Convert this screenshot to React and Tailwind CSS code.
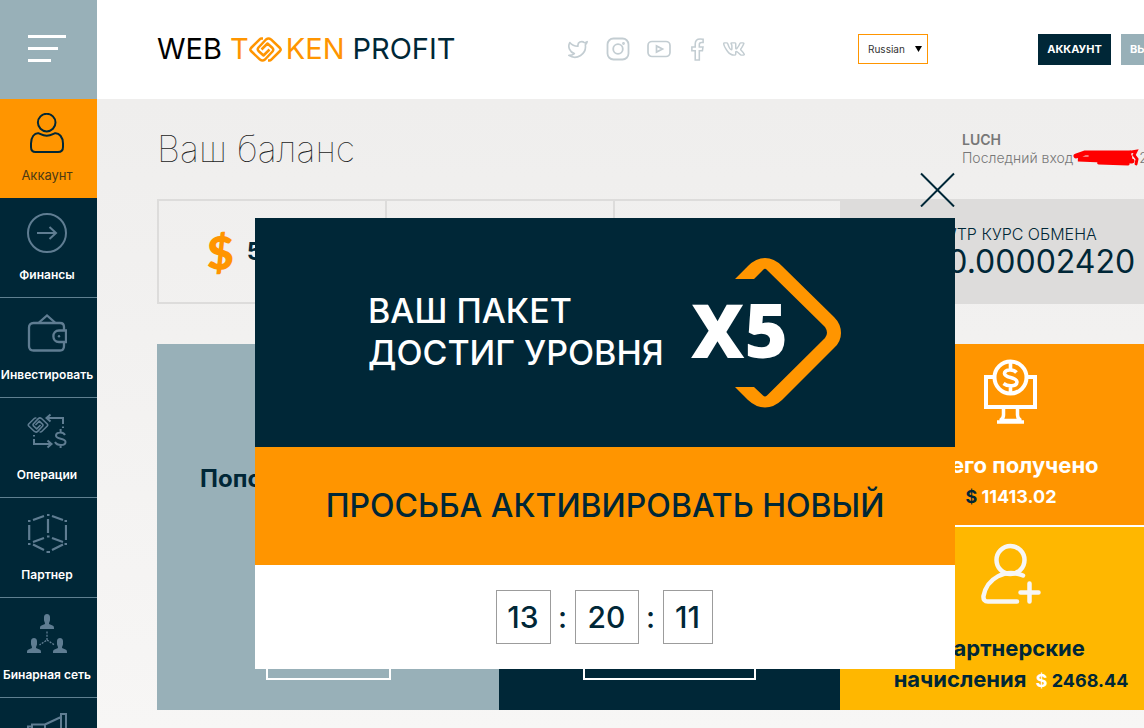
import React from "react";
import { FaFacebookF, FaVk } from "react-icons/fa";
import { Twitter } from "lucide-react";

function UserIcon() {
  return (
    <svg className="h-10 w-10" viewBox="0 0 40 40" fill="none" stroke="currentColor" strokeWidth="2">
      <circle cx="19.700" cy="9.600" r="8.800" />
      <path d="M11.500 20.200C14 21 15 22.800 19.700 22.800S25.500 21 28 20.200C32 19.800 36 24 36 30.500V34C36 37.500 34 39 31 39H8.500C5.500 39 4 37.500 4 34V30.500C4 24 7.500 19.800 11.500 20.200Z" />
    </svg>
  );
}

function ArrowIcon() {
  return (
    <svg className="h-10 w-10" viewBox="0 0 40 40" fill="none" stroke="currentColor" strokeWidth="2">
      <circle cx="20" cy="20" r="19" />
      <path d="M10 20H29M22.500 14L29 20L22.500 26" />
    </svg>
  );
}

function WalletIcon() {
  return (
    <svg className="h-10 w-10" viewBox="0 0 40 40" fill="none" stroke="currentColor" strokeWidth="2.300">
      <path d="M37 18V14C37 11.500 35.500 10 33 10H6.500C3.500 10 2 12 2 14.500V33C2 36 3.500 37.500 6.500 37.500H33C35.500 37.500 37 36 37 33V29" />
      <path d="M39 17.500H32C24.500 17.500 24.500 29 32 29H39Z" />
      <path d="M12 9.500L20 2.500L28 9.500" />
      <circle cx="32" cy="23.300" r="1.200" fill="currentColor" stroke="none" />
    </svg>
  );
}

/* Two interlocked hooks; the second is the first turned by half a circle. */
function TokenMark({ className, color = "currentColor" }) {
  return (
    <svg className={className} viewBox="0 0 33 25" fill="none" stroke={color} strokeWidth="2.500" strokeLinejoin="round">
      <path d="M19 23.500H20.500Q21.500 23.500 22.300 22.700L31 14Q32.300 12.500 31 11L22 2.400Q19.500 0.500 17 2.500L9.500 10.500Q8 12.300 9.500 14L14.500 18.500L20.500 12.500" />
      <path d="M14 1.500H12.500Q11.500 1.500 10.700 2.300L2 11Q0.700 12.500 2 14L11 22.600Q13.500 24.500 16 22.500L23.500 14.500Q25 12.700 23.500 11L18.500 6.500L12.500 12.500" />
    </svg>
  );
}

function ExchangeIcon() {
  return (
    <span className="relative block h-10 w-10">
      <TokenMark className="absolute left-0 top-1 h-4 w-[22px]" />
      <svg className="h-10 w-10" viewBox="0 0 40 40" fill="none" stroke="currentColor" strokeWidth="2">
        <path d="M36 13.500V15M36 11V5H20M23.500 1.500L19.500 5L23.500 8.500" />
        <path d="M7 22V23.500M7 26V31H24M20.500 27.500L24.500 31L20.500 34.500" />
        <path d="M38 22C36 18.500 29 19 29 22.500C29 27 38.500 24.500 38.500 29C38.500 33 30 33 28 29M33.600 16V19.500M33.600 31.500V35" />
      </svg>
    </span>
  );
}

function CubeIcon() {
  return (
    <svg className="h-10 w-10" viewBox="0 0 40 40" fill="none" stroke="currentColor" strokeWidth="2.200">
      <path d="M21 6V20M2.200 12V27M39 12V27M6 7L17 3M25 3L36 7M6 29L17 25M25 25L36 29M6 31.500L17 37M25 37L36 31.500" />
      <path d="M20 2H22.500M1 8H3.500M37.500 8H40M20 23.500H22.500M1 31H3.500M37.500 31H40M19.500 39.200H23" />
    </svg>
  );
}

function NetworkIcon() {
  return (
    <svg className="h-10 w-10" viewBox="0 0 40 40" fill="currentColor">
      <path d="M17 4C17 0 23 0 23 4V7C23 8.500 22 9 22 11L25.500 12.500C27 13 27 14 27 16H13C13 14 13 13 14.500 12.500L18 11C18 9 17 8.500 17 7Z" />
      <path d="M4 28C4 24 10 24 10 28V31C10 32.500 9 33 9 35L12.500 36.500C14 37 14 38 14 40H0C0 38 0 37 1.500 36.500L5 35C5 33 4 32.500 4 31Z" />
      <path d="M30 28C30 24 36 24 36 28V31C36 32.500 35 33 35 35L38.500 36.500C40 37 40 38 40 40H26C26 38 26 37 27.500 36.500L31 35C31 33 30 32.500 30 31Z" />
      <path d="M20 18.500V27L12.500 32M20 27L27.500 32" fill="none" stroke="currentColor" strokeWidth="1.300" strokeDasharray="2 1.200" />
    </svg>
  );
}

function MegaphoneIcon() {
  return (
    <svg className="h-10 w-10" viewBox="0 0 40 40" fill="none" stroke="currentColor" strokeWidth="2">
      <path d="M34 1H39V33H34ZM34 4L18 11.500V25L34 31M18 11.500H5V25H18M5 13.500H1V23H5M8 25L11 38H18L15 25" />
    </svg>
  );
}

const navItems = [
  { label: "Финансы", Icon: ArrowIcon },
  { label: "Инвестировать", Icon: WalletIcon },
  { label: "Операции", Icon: ExchangeIcon },
  { label: "Партнер", Icon: CubeIcon },
  { label: "Бинарная сеть", Icon: NetworkIcon },
  { label: "Новости", Icon: MegaphoneIcon },
];

function Sidebar() {
  return (
    <aside className="flex w-[97px] shrink-0 flex-col bg-[#002737]">
      <button type="button" aria-label="Меню" className="flex h-[99px] w-full shrink-0 flex-col gap-[9px] bg-[#98b0b8] pl-7 pt-[35px]">
        <span className="h-[3px] w-[38px] bg-white" />
        <span className="h-[3px] w-[30px] bg-white" />
        <span className="h-[3px] w-[23px] bg-white" />
      </button>
      <nav className="flex flex-col">
        <a href="#account" className="flex h-[99px] shrink-0 flex-col items-center bg-[#ff9500] pr-[3px] pt-[14px] text-[#002737]">
          <UserIcon />
          <span className="mt-3 text-[13px] leading-5 text-[#4d3a14]">Аккаунт</span>
        </a>
        {navItems.map(({ label, Icon }) => (
          <a key={label} href="#section" className="flex h-[100px] shrink-0 flex-col items-center border-b border-[#5f8090] pr-[3px] pt-[15px] text-[#5f7d92]">
            <Icon />
            <span className="mt-3 whitespace-nowrap text-[12px] font-semibold leading-5 text-white">{label}</span>
          </a>
        ))}
      </nav>
    </aside>
  );
}

function Logo() {
  return (
    <a href="#home" aria-label="Web Token Profit" className="flex w-[410px] shrink-0 items-center whitespace-nowrap text-[29px] leading-8 text-black">
      <span>WEB</span>
      <span className="ml-2 text-[#ff9500]">T</span>
      <TokenMark className="h-[25px] w-[33px]" color="#ff9500" />
      <span className="ml-1 text-[#ff9500]">KEN</span>
      <span className="ml-2 text-[#002737]">PROFIT</span>
    </a>
  );
}

const outline = { fill: "none", stroke: "currentColor" };

function Socials() {
  return (
    <div className="flex w-[291px] shrink-0 items-center gap-[17px] text-[#c3cdd2]">
      <a href="#twitter" aria-label="Twitter"><Twitter className="size-[22px]" strokeWidth={1.8} /></a>
      <a href="#instagram" aria-label="Instagram">
        <svg className="size-6" viewBox="0 0 24 24" fill="none" stroke="currentColor" strokeWidth="1.800">
          <rect x="1.500" y="1.500" width="21" height="21" rx="6" />
          <circle cx="12" cy="12" r="4.800" />
          <circle cx="17.500" cy="6.500" r="0.500" fill="currentColor" />
        </svg>
      </a>
      <a href="#youtube" aria-label="YouTube">
        <svg className="size-6" viewBox="0 0 24 24" fill="none" stroke="currentColor" strokeWidth="1.700">
          <rect x="1" y="4.500" width="22" height="15" rx="4" />
          <path d="M9.500 9V15L15.500 12Z" />
        </svg>
      </a>
      <a href="#facebook" aria-label="Facebook" className="flex w-[18px] justify-center"><FaFacebookF className="size-[21px] overflow-visible" {...outline} strokeWidth={38} /></a>
      <a href="#vk" aria-label="VK"><FaVk className="size-[22px] overflow-visible" {...outline} strokeWidth={38} /></a>
    </div>
  );
}

function Header() {
  return (
    <header className="h-[99px] shrink-0 bg-white pl-[60px]">
      <div className="flex h-[98px] w-[1025px] items-center">
        <Logo />
        <Socials />
        <div className="relative">
          <label htmlFor="lang" className="sr-only">Язык</label>
          <select id="lang" defaultValue="ru" className="h-[30px] w-[70px] appearance-none border border-[#ff9500] bg-white pl-[9px] text-[10px] text-[#333] outline-none">
            <option value="ru">Russian</option>
            <option value="en">English</option>
          </select>
          <svg className="pointer-events-none absolute right-1.5 top-3 h-[6px] w-[7px]" viewBox="0 0 7 6"><path d="M0 0H7L3.500 6Z" /></svg>
        </div>
        <div className="ml-auto flex gap-[10px] text-[11px] font-bold text-white">
          <button type="button" className="h-[31px] w-[73px] bg-[#002737]">АККАУНТ</button>
          <button type="button" className="h-[31px] w-[61px] bg-[#98b0b8]">ВЫХОД</button>
        </div>
      </div>
    </header>
  );
}

function BalanceRow() {
  return (
    <section className="grid grid-cols-[228px_228px_227px_342px]">
      <div className="flex h-[105px] items-center border-2 border-r-0 border-[#dddcdb] pl-12">
        <span className="font-['Lato'] text-[46px] font-extrabold leading-none text-[#ff9500]">$</span>
        <span className="ml-[13px] text-[24px] font-bold text-[#002737]">5.00</span>
      </div>
      <div className="border-2 border-r-0 border-[#dddcdb]" />
      <div className="border-2 border-r-0 border-[#dddcdb]" />
      <div className="bg-[#dddcdb] pl-4 pt-[25px] text-center text-[#002737]">
        <p className="text-[16px] font-light leading-5">WTP КУРС ОБМЕНА</p>
        <p className="text-[32px] leading-9"><span className="mr-6">$</span>0.00002420</p>
      </div>
    </section>
  );
}

function Cards() {
  return (
    <section className="mt-10 grid grid-cols-[342px_341px_342px] text-center">
      <div className="flex min-h-[366px] flex-col items-center justify-between bg-[#98b0b8] pb-[30px] pt-[119px]">
        <h2 className="text-[24px] font-bold leading-8 text-[#002737]">Пополнение баланса</h2>
        <button type="button" className="h-10 w-[125px] border-2 border-white text-white">Пополнить</button>
      </div>
      <div className="flex flex-col items-center justify-between bg-[#002737] pb-[30px] pt-[119px]">
        <h2 className="text-[24px] font-bold leading-8 text-white">Купить пакет</h2>
        <button type="button" className="h-10 w-[173px] border-2 border-white text-white">Инвестировать</button>
      </div>
      <div className="flex flex-col">
        <div className="flex h-[183px] flex-col items-center border-b-2 border-white bg-[#ff9500] pt-[15px] text-white">
          <svg className="h-[66px] w-[54px]" viewBox="0 0 54 66" fill="none" stroke="white" strokeWidth="4">
            <circle cx="26.500" cy="18.500" r="16" />
            <path d="M9 18H2V48H51V18H44" />
            <path d="M19.500 49V56Q19.500 60 16 61.500H37Q33.500 60 33.500 56V49M13 63H40" strokeWidth="3.500" />
            <path d="M32.500 13.500C29 9.500 20.500 10.500 20.500 14.500C20.500 19.500 33 17.500 33 23C33 27.500 24 28 19.500 24.500M26.500 4V11M26.500 26V33" strokeWidth="3.600" />
          </svg>
          <h3 className="mt-6 text-[22px] font-bold leading-8">Всего получено</h3>
          <p className="text-[18px] font-bold leading-8"><span className="text-[#002737]">$</span> 11413.02</p>
        </div>
        <div className="flex h-[183px] flex-col items-center bg-[#ffb700] pt-4 text-[#002737]">
          <svg className="h-[62px] w-[60px]" viewBox="0 0 60 62" fill="none" stroke="#f7f6f5" strokeWidth="4.500" strokeLinecap="round">
            <circle cx="29.500" cy="17" r="14" />
            <path d="M42 32.500C24 25.500 6 35 2.500 53Q2 58.500 7 58.500H36M48.500 40.500V58.500M39.500 49.500H57.500" />
          </svg>
          <h3 className="mt-7 w-[270px] text-[22px] font-bold leading-[31px]">
            Партнерские начисления <span className="ml-1 whitespace-nowrap text-[18px]"><span className="text-white">$</span> 2468.44</span>
          </h3>
        </div>
      </div>
    </section>
  );
}

function LevelDialog() {
  return (
    <div className="fixed inset-0 flex items-start justify-center pl-[66px] pt-[218px]">
      <div role="dialog" aria-label="Уровень пакета" className="relative w-[700px]">
        <button type="button" aria-label="Закрыть" className="absolute -top-[46px] right-0">
          <svg className="size-[35px]" viewBox="0 0 35 35" stroke="#002737" strokeWidth="2"><path d="M1 1.500L34 34.500M34 1.500L1 34.500" /></svg>
        </button>
        <div className="flex h-[229px] items-center bg-[#002737] pl-[113px] text-white">
          <p className="w-[323px] whitespace-nowrap pb-[2px] text-[34px] font-medium leading-[42px]">ВАШ ПАКЕТ<br />ДОСТИГ УРОВНЯ</p>
          <div className="relative flex h-[150px] w-[150px] items-center pb-[6px]">
            <span className="relative z-10 font-['Open_Sans'] text-[74px] font-extrabold leading-none">X5</span>
            <svg className="absolute right-0 top-0 h-[150px] w-[106px]" viewBox="0 0 106 150" fill="#ff9500">
              <path d="M0 21L13 8Q21 0 30 0T47 8L99 59Q106 66 106 75T99 90L47 142Q39 149.500 30 149.500T13 142L0 129H19L28 137.500Q30 139.500 32 137.500L90 80Q94 75 90 69L32 12Q30 9.500 28 12L19 21Z" />
            </svg>
          </div>
        </div>
        <div className="flex h-[118px] items-center justify-center whitespace-nowrap bg-[#ff9500] text-[32px] font-medium text-[#002737]">
          ПРОСЬБА АКТИВИРОВАТЬ НОВЫЙ
        </div>
        <div className="flex h-[104px] items-center justify-center bg-white pr-[2px] text-[30px] font-medium text-[#002737]">
          <span className="flex h-[54px] w-[55px] items-center justify-center border border-[#9c9c9c]">13</span>
          <span className="w-6 text-center">:</span>
          <span className="flex h-[54px] w-16 items-center justify-center border border-[#9c9c9c]">20</span>
          <span className="w-6 text-center">:</span>
          <span className="flex h-[54px] w-[50px] items-center justify-center border border-[#9c9c9c]">11</span>
        </div>
      </div>
    </div>
  );
}

export default function App() {
  return (
    <div className="flex h-screen overflow-hidden font-['Inter','Noto_Sans',sans-serif]">
      <Sidebar />
      <div className="flex min-w-0 flex-1 flex-col overflow-hidden">
        <Header />
        <main className="flex-1 bg-linear-to-b from-[#efeeed] to-[#f7f6f5] pl-[60px]">
          <div className="flex h-[100px] w-[1025px] justify-between pt-8">
            <h1 className="text-[36px] font-thin leading-9 text-[#222]">Ваш баланс</h1>
            <div className="w-[220px] text-[14px] leading-[18px] text-[#777]">
              <p className="font-semibold">LUCH</p>
              <p className="flex items-center whitespace-nowrap font-light">
                Последний вход
                <svg className="h-[18px] w-[66px]" viewBox="0 0 67 18" fill="none" stroke="#f00" strokeLinecap="round">
                  <path d="M3 7L12 4L59 4L16 8L60 9L5 10L30 11L60 12" strokeWidth="5" />
                  <path d="M26 14L56 15M58 3L64 2L62 6L65 10L64 15" strokeWidth="3" />
                </svg>
                2019
              </p>
            </div>
          </div>
          <BalanceRow />
          <Cards />
        </main>
      </div>
      <LevelDialog />
    </div>
  );
}
